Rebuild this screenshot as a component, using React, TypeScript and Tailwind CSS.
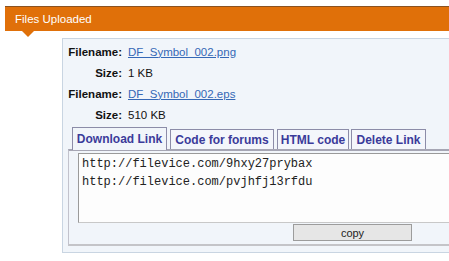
import React from "react";

const files = [
  { name: "DF_Symbol_002.png", size: "1 KB" },
  { name: "DF_Symbol_002.eps", size: "510 KB" },
];

const tabs = [
  { label: "Download Link", w: "w-[95px]", ml: "ml-[4px]", active: true },
  { label: "Code for forums", w: "w-[104px]", ml: "ml-[3px]", active: false },
  { label: "HTML code", w: "w-[72px]", ml: "ml-[3px]", active: false },
  { label: "Delete Link", w: "w-[75px]", ml: "ml-[2px]", active: false },
];

const links = ["http://filevice.com/9hxy27prybax", "http://filevice.com/pvjhfj13rfdu"];

const App = () => {
  return (
    <div className="w-[449px] h-[261px] overflow-hidden bg-white font-['Liberation_Sans',sans-serif]">
      <div className="pt-[6px] pl-[5px]">
        <div className="relative h-[25px] w-[460px] bg-[#e07009] border-t border-[#8a5220] pl-[10px] pt-[5px] text-white text-[11.5px] leading-[14px]">
          Files Uploaded
          <div className="absolute left-[17px] top-full w-0 h-0 border-l-[6px] border-r-[6px] border-t-[6px] border-l-transparent border-r-transparent border-t-[#e07009]" />
        </div>
      </div>

      <div className="ml-[62px] mt-[7px] w-[420px] bg-[#f1f5fa] border border-[#c9d5e2] pl-[5px] pt-[3px] pb-[6px]">
        {files.map((f) => (
          <React.Fragment key={f.name}>
            <div className="flex items-center h-[21px] text-[11.5px] text-[#111]">
              <span className="w-[54px] text-right font-bold">Filename:</span>
              <a href="#" className="ml-[6px] text-[#3568b6] underline">
                {f.name}
              </a>
            </div>
            <div className="flex items-center h-[21px] text-[11.5px] text-[#111]">
              <span className="w-[54px] text-right font-bold">Size:</span>
              <span className="ml-[6px]">{f.size}</span>
            </div>
          </React.Fragment>
        ))}

        <div className="flex items-end h-[22px] mt-[1px]">
          {tabs.map((t) => (
            <div
              key={t.label}
              className={`${t.w} ${t.ml} flex items-center justify-center border border-[#8c8ca8] text-[12px] font-bold text-[#3b3b9a] ${
                t.active ? "h-[23px] border-b-0 bg-[#f1f5fa] relative z-10 -mb-[1px]" : "h-[20px] bg-[#f4f6fb] border-b-0"
              }`}
            >
              {t.label}
            </div>
          ))}
        </div>

        <div className="border-t-[2px] border-l border-b-[2px] border-t-[#a6a6b4] border-l-[#c2c2cc] border-b-[#c4c4c8] pl-[9px] pt-[2px] pb-[3px]">
          <div className="h-[70px] bg-[#fdfdfd] border-t border-l border-t-[#9a9a9a] border-l-[#9a9a9a] border-b border-b-[#c8c8c8] pl-[3px] pt-[1px] font-['Liberation_Mono',monospace] text-[12px] leading-[18px] text-[#222]">
            {links.map((l) => (
              <div key={l}>{l}</div>
            ))}
          </div>
          <button className="block ml-[215px] mt-[1px] w-[119px] h-[17px] bg-[#e6e6e6] border border-[#9c9c9c] text-[11px] text-[#222] leading-[14px]">
            copy
          </button>
        </div>
      </div>
    </div>
  );
};

export default App;
